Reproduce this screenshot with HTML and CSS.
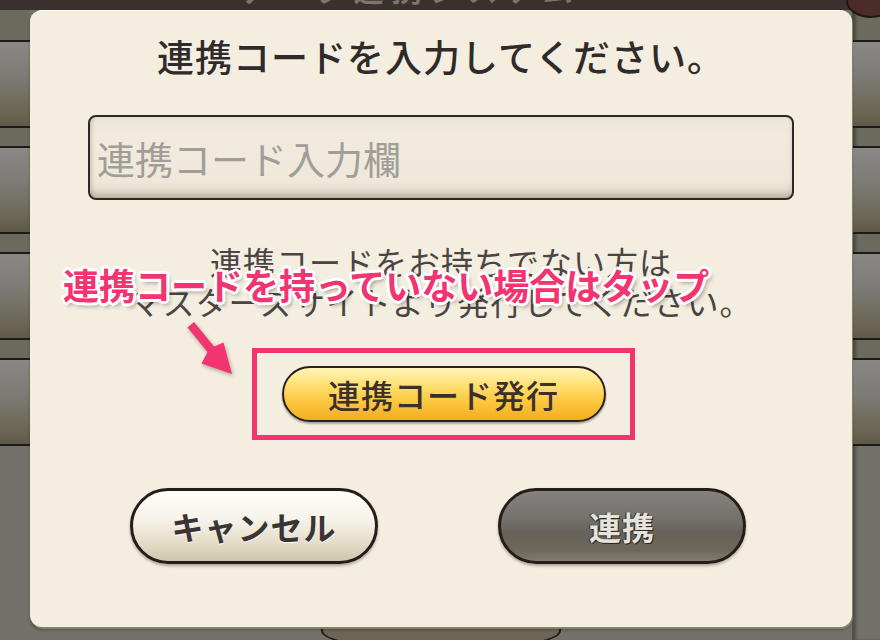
FILE: index.html
```html
<!DOCTYPE html>
<html lang="ja">
<head>
  <meta charset="UTF-8">
  <meta name="viewport" content="width=device-width, initial-scale=1.0">
  <title>連携コード入力</title>
  <link rel="stylesheet" href="styles.css">
</head>
<body>
  <div class="screen">
    <div class="topbar"><span class="topbar-title">データ連携システム</span></div>
    <span class="corner-btn"></span>

    <div class="side side-left">
      <div class="side-row"></div>
      <div class="side-row"></div>
      <div class="side-row"></div>
      <div class="side-row"></div>
    </div>

    <main class="dialog">
      <h1 class="title">連携コードを入力してください。</h1>
      <input type="text" class="code-input" placeholder="連携コード入力欄">
      <p class="hint">連携コードをお持ちでない方は<br>マスターズサイトより発行してください。</p>
      <div class="issue-frame">
        <button class="issue-btn">連携コード発行</button>
      </div>
      <div class="actions">
        <button class="btn btn-cancel">キャンセル</button>
        <button class="btn btn-link">連携</button>
      </div>

      <!-- 注釈 -->
      <div class="note">連携コードを持っていない場合はタップ</div>
      <svg class="note-arrow" width="60" height="65" viewBox="0 0 60 65">
        <polygon points="7.5,11.5 14,6 34.1,30.5 43.5,26.5 52,58 21.5,47.5 27.5,36" fill="#f23470"/>
      </svg>
    </main>

    <div class="side side-right">
      <div class="side-row"></div>
      <div class="side-row"></div>
      <div class="side-row"></div>
      <div class="side-row"></div>
    </div>

    <div class="bottom"><span class="bottom-knob"></span></div>
  </div>
</body>
</html>
```

FILE: styles.css
```css
body {
  margin: 0;
  background: #74716a;
  font-family: "Noto Sans CJK JP", "Noto Sans", sans-serif;
}
.screen {
  position: relative;
  width: 880px;
  height: 640px;
  overflow: hidden;
  display: grid;
  grid-template-columns: 30px 822px 28px;
  grid-template-rows: 10px 617px 13px;
  background: #74716a;
}
.topbar {
  grid-column: 1 / -1;
  background: #3a312f;
  overflow: hidden;
  display: flex;
  justify-content: center;
  padding-right: 60px;
}
.topbar-title {
  font-size: 30px;
  line-height: 30px;
  margin-top: -27px;
  font-weight: 700;
  letter-spacing: 8px;
  color: #7d766a;
}
.corner-btn {
  position: absolute;
  right: -16px;
  top: -16px;
  width: 46px;
  height: 30px;
  border-radius: 50%;
  background: #4b2c28;
  border: 2px solid #24140f;
  z-index: 2;
}
.side {
  grid-row: 2 / 4;
  padding-top: 30px;
  display: flex;
  flex-direction: column;
  gap: 18px;
  background: linear-gradient(#6c6a5d 0, #6c6a5d 436px, #74716a 436px);
}
.side-row {
  flex: none;
  height: 84px;
  border-top: 2px solid #1d1b19;
  border-bottom: 2px solid #1d1b19;
  background: linear-gradient(#8a8884, #7d7b76 40%, #6a6553 85%, #5f5a48);
}
.side-right {
  box-shadow: inset 4px 0 3px rgba(0, 0, 0, 0.3);
}
.dialog {
  grid-column: 2;
  grid-row: 2;
  position: relative;
  z-index: 1;
  box-sizing: border-box;
  padding-top: 27px;
  display: flex;
  flex-direction: column;
  align-items: center;
  background: #f4eee0;
  border-top: 1px solid #fffcf4;
  border-radius: 12px;
  box-shadow: 1px 2px 0 #868067, 0 3px 3px rgba(0, 0, 0, 0.3);
}
.title {
  margin: 0;
  font-size: 37px;
  line-height: 1;
  font-weight: 500;
  letter-spacing: 1px;
  color: #2f2b2a;
}
.code-input {
  margin-top: 40px;
  width: 706px;
  height: 85px;
  box-sizing: border-box;
  padding: 0 0 0 7px;
  border: 2px solid #2d2926;
  border-radius: 8px;
  background: linear-gradient(#ebe4d4, #f1ebde 20%, #efe8da 80%, #d9d0bd);
  box-shadow: inset 0 -4px 5px rgba(80, 60, 30, 0.18), inset 3px 0 3px rgba(80, 60, 30, 0.08);
  font-family: inherit;
  font-size: 38px;
  color: #333;
  outline: none;
}
.code-input::placeholder {
  color: #a19d98;
}
.hint {
  margin: 41px 0 0;
  font-size: 32px;
  line-height: 40px;
  letter-spacing: 1px;
  text-align: center;
  color: #4a4443;
}
.issue-frame {
  margin: 27px 0 0 5px;
  width: 383px;
  height: 92px;
  box-sizing: border-box;
  border: 5px solid #f23470;
  display: flex;
  align-items: center;
  justify-content: center;
}
.issue-btn {
  width: 324px;
  height: 56px;
  box-sizing: border-box;
  padding: 0;
  border: 2.5px solid #2a1f1a;
  border-radius: 28px;
  background: linear-gradient(#fff3b8 0%, #ffe27a 30%, #fccb45 60%, #f3ac1f 100%);
  box-shadow: 0 2px 2px rgba(0, 0, 0, 0.3);
  font-family: inherit;
  font-size: 32px;
  line-height: 1;
  font-weight: 500;
  letter-spacing: 1px;
  color: #3a302c;
}
.actions {
  margin: 48px 6px 0 0;
  display: flex;
  gap: 120px;
}
.btn {
  width: 248px;
  height: 76px;
  box-sizing: border-box;
  padding: 0;
  border: 3px solid #261c18;
  border-radius: 38px;
  box-shadow: 0 2px 3px rgba(0, 0, 0, 0.3);
  font-family: inherit;
  font-size: 32px;
  line-height: 1;
  font-weight: 700;
  letter-spacing: 1px;
}
.btn-cancel {
  background: linear-gradient(#fffefb 0%, #f7f3ea 40%, #e4dcc8 75%, #cfc5ad 100%);
  color: #3a3434;
  text-shadow: 0 1px 0 #fff;
}
.btn-link {
  background: linear-gradient(#84827f 0%, #77746e 35%, #66625a 60%, #6c6859 85%, #827d6e 100%);
  color: #e6e3dc;
  text-shadow: 1px 1px 0 #2a2622, -1px 0 1px #2a2622;
}
.note {
  position: absolute;
  left: 33px;
  top: 255px;
  font-size: 36px;
  line-height: 1;
  font-weight: 700;
  white-space: nowrap;
  color: #f23470;
  text-shadow:
    3px 0 0 #fff, -3px 0 0 #fff, 0 3px 0 #fff, 0 -3px 0 #fff,
    2px 2px 0 #fff, -2px -2px 0 #fff, 2px -2px 0 #fff, -2px 2px 0 #fff,
    3px 4px 4px rgba(0, 0, 0, 0.35);
}
.note-arrow {
  position: absolute;
  left: 150px;
  top: 305px;
  filter: drop-shadow(1px 2px 2px rgba(0, 0, 0, 0.3));
}
.bottom {
  grid-column: 2;
  grid-row: 3;
  display: flex;
  justify-content: center;
  overflow: hidden;
}
.bottom-knob {
  width: 240px;
  height: 24px;
  box-sizing: border-box;
  border: 2px solid #1e1a17;
  border-top: none;
  border-radius: 0 0 120px 120px / 0 0 20px 20px;
  background: #6c6658;
}
```
